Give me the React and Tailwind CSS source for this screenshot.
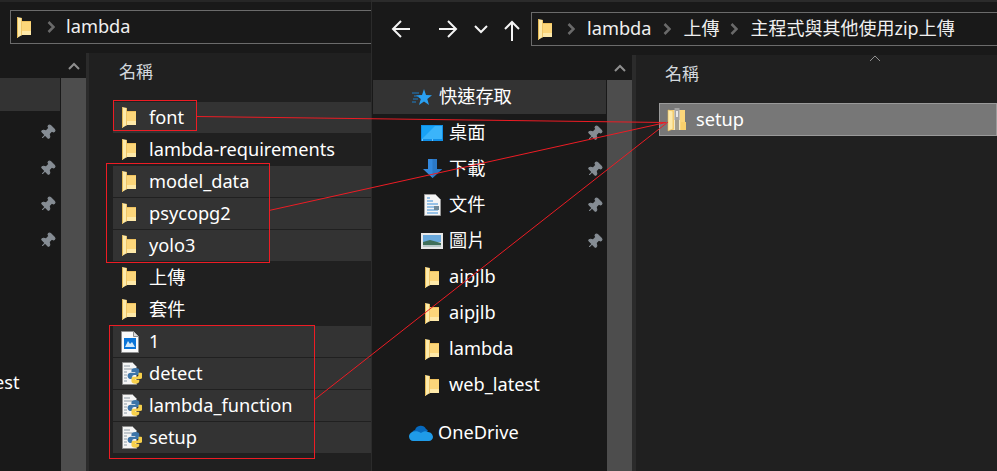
import { Pin } from "lucide-react";

const FolderIcon = () => (
  <svg width="16" height="21" viewBox="0 0 16 21" className="shrink-0">
    <path d="M6 4h9v14H6z" fill="#fcd67a" />
    <path d="M6 4h9v1H6z" fill="#eec15e" />
    <path d="M6 14h9v4H6z" fill="#fee9a9" />
    <path d="M1 0l5 1v17l-5 3z" fill="#fdeaaa" />
    <path d="M5 1h1v17l-1 .6z" fill="#eec568" />
    <path d="M1 0l1 .2V20.400L1 21z" fill="#e5b954" />
  </svg>
);

const ImageFile = () => (
  <svg width="18" height="22" viewBox="0 0 18 22" className="shrink-0">
    <path d="M.5.500h12l5 5v16H.5z" fill="#fafafa" stroke="#8f8f8f" />
    <path d="M12.500.500v5h5" fill="#dcdcdc" stroke="#8f8f8f" />
    <path d="M3 7h12v11H3z" fill="#0a74d8" />
    <path d="M4 16l3-6 2 3 2-2 3 5z" fill="#cfe8fb" />
  </svg>
);

const PyFile = () => (
  <svg width="21" height="23" viewBox="0 0 21 23" className="shrink-0">
    <path d="M1.500.500h10l4 4v18h-14z" fill="#f5f5f5" stroke="#8a8a8a" />
    <path d="M3 4h6M3 7h8M3 10h3M3 13h3M3 16h3M3 19h3" stroke="#8d9aa5" />
    <g transform="translate(5 4.500) scale(0.78)">
      <path d="M12 2c-3 0-5 1-5 3v2h5v1H6c-2 0-4 1.500-4 4s1.500 4 3.500 4H8v-2.500C8 12 9 11 10.500 11h4c1.500 0 2.500-1 2.500-2.500V5c0-2-2-3-5-3z" fill="#3c74a8" />
      <path d="M12 22c3 0 5-1 5-3v-2h-5v-1h6c2 0 4-1.500 4-4s-1.500-4-3.500-4H16v2.500c0 1.500-1 2.500-2.500 2.500h-4C8 13 7 14 7 15.500V19c0 2 2 3 5 3z" fill="#f7d04b" />
    </g>
  </svg>
);

const ZipIcon = () => (
  <svg width="20" height="24" viewBox="0 0 20 24" className="shrink-0">
    <path d="M1 2h17v20H1z" fill="#fcd67a" />
    <path d="M1 2l5 1v18l-5 2z" fill="#fdeaaa" stroke="#e5b954" strokeWidth="0.6" />
    <path d="M14 14h5v8h-5z" fill="#f8cf6c" />
    <path d="M7 2h6v20H7z" fill="#efe6c8" />
    <path d="M7.500 0h5v12h-5z" fill="#a3a3a3" />
    <path d="M9 3h2v6H9z" fill="#e8e8e8" />
    <path d="M8 13h4M8 15h4M8 17h4M8 19h4M8 21h4" stroke="#555" />
  </svg>
);

const PinIcon = () => (
  <Pin size={17} fill="#868d94" stroke="#868d94" strokeWidth={1.5} className="rotate-45" />
);

const StarIcon = () => (
  <svg width="20" height="18" viewBox="0 0 20 18">
    <path d="M12 1l2 6 6 .3-4.700 3.700 1.700 6-5-3.500L7 17l1.800-6L4 7.300l6-.3z" fill="#2aa0f2" />
    <path d="M0 5h7M2 8h5M1 11h5M0 14h4" stroke="#1c7fc9" />
  </svg>
);

const DesktopIcon = () => (
  <svg width="22" height="16" viewBox="0 0 22 16">
    <path d="M0 0h22v16H0z" fill="#0f8fe8" />
    <path d="M1 1h20v13H1z" fill="#18a2f6" />
    <path d="M1 14L14 1h7v13z" fill="#3bb4fa" />
    <path d="M1 15h20" stroke="#cfeaff" strokeDasharray="1 9" />
  </svg>
);

const DownloadIcon = () => (
  <svg width="19" height="20" viewBox="0 0 19 20">
    <path d="M5 0h9v10h5l-9.500 9L0 10h5z" fill="#3388dd" />
    <path d="M9.500 0H14v10h5l-9.500 9z" fill="#2b78c6" />
  </svg>
);

const DocIcon = () => (
  <svg width="17" height="22" viewBox="0 0 17 22">
    <path d="M.5.500h11l5 5v16H.5z" fill="#f5f5f5" stroke="#999" />
    <path d="M3 4h3M3 7h6M3 10h11M3 13h7M3 16h11M3 19h11" stroke="#3a8fd8" />
    <path d="M10 12h5v4h-5z" fill="#6f8a9a" />
  </svg>
);

const PictureIcon = () => (
  <svg width="22" height="16" viewBox="0 0 22 16">
    <path d="M0 0h22v16H0z" fill="#e8e8e8" />
    <path d="M2 2h18v7H2z" fill="#6aa9dc" />
    <path d="M2 9l7-2 11 3v4H2z" fill="#3f6f5a" />
    <path d="M2 12h18v2H2z" fill="#b8c7c8" />
  </svg>
);

const CloudIcon = () => (
  <svg width="24" height="16" viewBox="0 0 24 16">
    <path d="M6 5a6 6 0 0 1 11-1 5 5 0 0 1 2 2L9 12 3 9a4 4 0 0 1 3-4z" fill="#0669bd" />
    <path d="M3 7c-2 1-3 3-3 4.500C0 14 2 16 4 16h16c2 0 4-2 4-4s-2-5-5-5c-3-2-6 0-7 1-3-2-6-2-9-1z" fill="#1f9be8" />
  </svg>
);

const Arrow = ({ d, w = 20 }) => (
  <svg width={w} height="22" viewBox={`0 0 ${w} 22`} fill="none" stroke="#f4f4f4" strokeWidth="2">
    <path d={d} />
  </svg>
);

const Crumb = () => (
  <svg width="8" height="12" viewBox="0 0 8 12" fill="none" stroke="#6a6a6a" strokeWidth="2.500" className="shrink-0">
    <path d="M1.500 1l5 5-5 5" />
  </svg>
);

const Caret = ({ thin }) => (
  <svg width="12" height="8" viewBox="0 0 12 8" fill="none" stroke="#8f8f8f" strokeWidth={thin ? 1 : 2}>
    <path d="M1 7l5-5 5 5" />
  </svg>
);

const FileRow = ({ icon, name, hl }) => (
  <div className={`h-[31px] mb-px flex items-center pl-[8px] gap-[7px] text-white ${hl ? "bg-[#333333]" : ""}`}>
    <span className="w-[20px] flex">{icon}</span>
    <span className="pb-[2px] ml-px">{name}</span>
  </div>
);

const leftFiles = [
  { icon: <FolderIcon />, name: "font", hl: true },
  { icon: <FolderIcon />, name: "lambda-requirements" },
  { icon: <FolderIcon />, name: "model_data", hl: true },
  { icon: <FolderIcon />, name: "psycopg2", hl: true },
  { icon: <FolderIcon />, name: "yolo3", hl: true },
  { icon: <FolderIcon />, name: "上傳" },
  { icon: <FolderIcon />, name: "套件" },
  { icon: <ImageFile />, name: "1", hl: true },
  { icon: <PyFile />, name: "detect", hl: true },
  { icon: <PyFile />, name: "lambda_function", hl: true },
  { icon: <PyFile />, name: "setup", hl: true },
];

const quickLinks = [
  { icon: <DesktopIcon />, name: "桌面" },
  { icon: <DownloadIcon />, name: "下載" },
  { icon: <DocIcon />, name: "文件" },
  { icon: <PictureIcon />, name: "圖片" },
];

const recent = ["aipjlb", "aipjlb", "lambda", "web_latest"];

const NavRow = ({ icon, name, pinned }) => (
  <div className="h-[36px] flex items-center text-white">
    <span className="ml-[45px] w-[30px] flex justify-center shrink-0">{icon}</span>
    <span className="ml-[2px] flex-1 pb-[2px]">{name}</span>
    {pinned && <span className="mr-[4px] flex"><PinIcon /></span>}
  </div>
);

const Scrollbar = () => (
  <div className="w-[25px] shrink-0 flex flex-col">
    <div className="h-[25px] flex items-center justify-center"><Caret /></div>
    <div className="flex-1 bg-[#4d4d4d]" />
  </div>
);

export default function App() {
  return (
    <div
      className="relative w-[997px] h-[471px] overflow-hidden flex bg-[#191919] text-[18.2px] leading-[24px]"
      style={{ fontFamily: '"Noto Sans", "Noto Sans CJK TC", sans-serif' }}
    >
      {/* left window */}
      <div className="w-[372px] shrink-0 flex flex-col border-r border-[#2b2b2b]">
        <div className="h-[53px] shrink-0 pt-[8px] pl-[10px] border-t-2 border-[#262626]">
          <div className="h-[34px] border border-r-0 border-[#6b6b6b] flex items-center pl-[5px] text-[#f0f0f0]">
            <FolderIcon />
            <span className="ml-[15px]"><Crumb /></span>
            <span className="ml-[11px] pb-[2px]">lambda</span>
          </div>
        </div>
        <div className="flex-1 flex min-h-0">
          <div className="w-[60px] shrink-0 pt-[25px] mr-px overflow-hidden">
            <div className="h-[33px] bg-[#333333]" />
            <div className="h-[3px]" />
            {[0, 1, 2, 3].map((i) => (
              <div key={i} className="h-[36px] flex items-center justify-end pr-[4px]"><PinIcon /></div>
            ))}
            <div className="h-[108px]" />
            <div className="h-[32px] flex items-center text-white -ml-[6px]">est</div>
          </div>
          <Scrollbar />
          <div className="w-[3px] shrink-0 bg-[#2b2b2b]" />
          <div className="flex-1 bg-[#202020] pl-[24px]">
            <div className="h-[49px] pt-[7px] pl-[6px] text-[17px] text-[#d3d8dd]">名稱</div>
            {leftFiles.map((f, i) => (
              <FileRow key={i} {...f} />
            ))}
          </div>
        </div>
      </div>

      {/* right window */}
      <div className="flex-1 flex flex-col min-w-0">
        <div className="h-[55px] shrink-0 flex pt-[12px] pl-[19px] border-t-2 border-[#2b2b2b]">
          <div className="flex items-center h-[34px] mt-[-2px] gap-[27px]">
            <Arrow d="M19 11H2M10 3l-8 8 8 8" />
            <div className="flex items-center gap-[16px]">
              <Arrow d="M1 11h17M10 3l8 8-8 8" />
              <Arrow w={14} d="M1 8l6 6 6-6" />
            </div>
          </div>
          <span className="ml-[15px] mt-[6px] h-[22px] flex">
            <Arrow w={18} d="M9 21V2M2 9l7-7 7 7" />
          </span>
          <div className="ml-[10px] h-[34px] mt-[-2px] flex-1 border border-r-0 border-[#6b6b6b] flex items-center pl-[5px] text-[#f0f0f0] whitespace-nowrap">
            <FolderIcon />
            <span className="ml-[14px]"><Crumb /></span>
            <span className="ml-[12px] pb-[2px]">lambda</span>
            <span className="ml-[12px]"><Crumb /></span>
            <span className="ml-[12px] text-[18px] pb-[2px]">上傳</span>
            <span className="ml-[11px]"><Crumb /></span>
            <span className="ml-[12px] text-[18px] pb-[2px]">主程式與其他使用zip上傳</span>
          </div>
        </div>
        <div className="flex-1 flex min-h-0">
          <div className="w-[235px] shrink-0 pt-[25px]">
            <div className="h-[34px] bg-[#333333] mx-px flex items-center text-white pl-[39px] gap-[7px] mb-px">
              <StarIcon />
              <span className="pb-[2px]">快速存取</span>
            </div>
            {quickLinks.map((l, i) => (
              <NavRow key={i} {...l} pinned />
            ))}
            {recent.map((name, i) => (
              <NavRow key={i} icon={<FolderIcon />} name={name} />
            ))}
            <div className="h-[48px] flex items-center text-white pl-[37px] gap-[5px] pt-[12px]">
              <CloudIcon />
              <span className="pb-[2px]">OneDrive</span>
            </div>
          </div>
          <Scrollbar />
          <div className="w-[4px] shrink-0 bg-[#2b2b2b]" />
          <div className="relative flex-1 bg-[#202020] pl-[23px]">
            <span className="absolute left-[233px] top-[-1px] flex"><Caret thin /></span>
            <div className="h-[48px] pt-[7px] pl-[6px] text-[17px] text-[#d3d8dd]">名稱</div>
            <div className="h-[33px] bg-[#777777] border border-[#9a9a9a] flex items-center pl-[7px] gap-[9px] text-white">
              <ZipIcon />
              <span className="pb-[2px]">setup</span>
            </div>
          </div>
        </div>
      </div>

      {/* red annotation marks drawn over both windows */}
      <svg className="absolute inset-0 pointer-events-none" width="997" height="471" fill="none" stroke="#ed1c24">
        <rect x="113.500" y="100.500" width="83" height="30" />
        <rect x="106.500" y="163.500" width="163" height="99" />
        <rect x="109.500" y="325.500" width="205" height="133" />
        <path d="M196 116.500L666 122.500" />
        <path d="M269 210.500L666 122.500" />
        <path d="M314 400L668 122" />
      </svg>
    </div>
  );
}
